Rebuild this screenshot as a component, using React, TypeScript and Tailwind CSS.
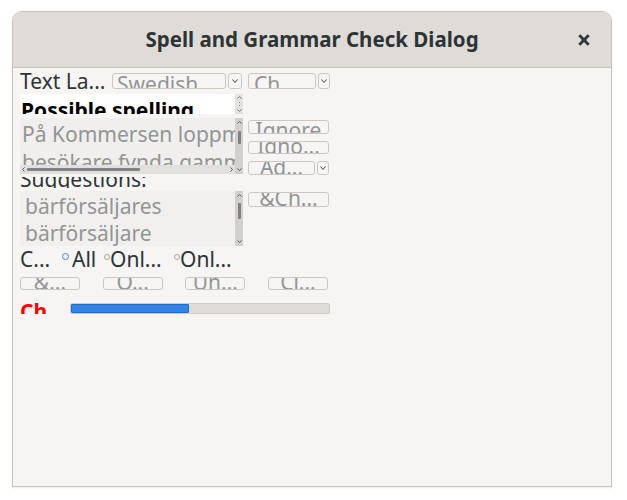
import React from "react";

function Chev({ dir, color = "#3d4244", w = 6, h = 4 }: { dir: "up" | "down" | "left" | "right"; color?: string; w?: number; h?: number }) {
  const pts =
    dir === "down"
      ? `0.5,0.5 ${w / 2},${h - 0.5} ${w - 0.5},0.5`
      : dir === "up"
      ? `0.5,${h - 0.5} ${w / 2},0.5 ${w - 0.5},${h - 0.5}`
      : dir === "left"
      ? `${w - 0.5},0.5 0.5,${h / 2} ${w - 0.5},${h - 0.5}`
      : `0.5,0.5 ${w - 0.5},${h / 2} 0.5,${h - 0.5}`;
  return (
    <svg width={w} height={h} viewBox={`0 0 ${w} ${h}`} className="block shrink-0">
      <polyline points={pts} fill="none" stroke={color} strokeWidth="1" />
    </svg>
  );
}

function ArrowBtn({ className = "" }: { className?: string }) {
  return (
    <div className={`h-full border border-[#cdc7c2] rounded-[3px] flex items-center justify-center shrink-0 ${className}`}>
      <Chev dir="down" w={6} h={4} />
    </div>
  );
}

function Btn({ children, className = "", inner = "" }: { children: React.ReactNode; className?: string; inner?: string }) {
  return (
    <div className={`border border-[#cdc7c2] rounded-[3px] overflow-hidden whitespace-nowrap text-center text-[#929595] shrink-0 ${className}`}>
      <div className={`leading-[14px] ${inner}`}>{children}</div>
    </div>
  );
}

function VScroll({ h, thumbTop, thumbH }: { h: string; thumbTop: string; thumbH: string }) {
  return (
    <div className={`w-[8px] ${h} bg-[#d2d0cd] flex flex-col items-center shrink-0`}>
      <div className="mt-[3px]">
        <Chev dir="up" w={5} h={3} color="#555a5c" />
      </div>
      <div className={`${thumbTop} ${thumbH} w-[3px] bg-[#7f8284] rounded-[1px]`} />
      <div className="flex-1" />
      <div className="mb-[3px]">
        <Chev dir="down" w={5} h={3} color="#555a5c" />
      </div>
    </div>
  );
}

export default function App() {
  return (
    <div className="w-[627px] h-[500px] bg-white pl-[12px] pt-[11px] font-['Noto_Sans',sans-serif]">
      <div className="w-[600px] h-[476px] rounded-t-[10px] border border-[#c6c2be] bg-[#f6f5f4] flex flex-col overflow-hidden shadow-[0_1px_2px_rgba(0,0,0,0.08)]">
        {/* Title bar */}
        <div className="h-[56px] shrink-0 bg-[#dfdcd8] border-b border-[#c5c1bc] grid grid-cols-[1fr_auto_1fr] items-center">
          <div />
          <div className="text-[20.5px] font-bold text-[#2e3436] leading-[21px] whitespace-nowrap">
            Spell and Grammar Check Dialog
          </div>
          <div className="flex justify-end pr-[21px]">
            <svg width="12" height="12" viewBox="0 0 12 12" className="block">
              <path d="M1.3 1.3 L10.7 10.7 M10.7 1.3 L1.3 10.7" stroke="#2e3436" strokeWidth="2.8" strokeLinecap="butt" />
            </svg>
          </div>
        </div>

        {/* Content */}
        <div className="pl-[7px] pt-[5px] flex flex-col text-[21px] text-[#2e3436]">
          {/* Row 1 */}
          <div className="flex h-[16px]">
            <div className="w-[92px] h-[16px] leading-[16px] overflow-hidden whitespace-nowrap shrink-0">Text La...</div>
            <div className="w-[114px] h-[16px] border border-[#cdc7c2] rounded-[3px] overflow-hidden pl-[4px] pt-[2px] text-[#929595] whitespace-nowrap shrink-0">
              <div className="leading-[16px]">Swedish</div>
            </div>
            <ArrowBtn className="ml-[2px] w-[14px]" />
            <div className="ml-[6px] w-[68px] h-[16px] border border-[#cdc7c2] rounded-[3px] overflow-hidden pl-[5px] pt-[2px] text-[#929595] whitespace-nowrap shrink-0">
              <div className="leading-[16px]">Ch...</div>
            </div>
            <ArrowBtn className="ml-[2px] w-[12px]" />
          </div>

          {/* Row 2 */}
          <div className="flex h-[20px] mt-[5px]">
            <div className="w-[215px] h-[20px] bg-white overflow-hidden pl-[1px] pt-[6px] font-bold text-black whitespace-nowrap">
              <div className="leading-[20px]">Possible spelling</div>
            </div>
            <div className="w-[8px] h-[20px] bg-[#e4e2df] flex flex-col items-center justify-between py-[2px]">
              <Chev dir="up" w={5} h={3} color="#6a6e70" />
              <div className="w-[1px] h-[4px] border-t border-b border-[#8a8d8f]" />
              <Chev dir="down" w={5} h={3} color="#6a6e70" />
            </div>
          </div>

          {/* Row 3 */}
          <div className="flex mt-[4px]">
            <div className="flex h-[56px]">
              <div className="w-[215px] h-[56px] flex flex-col bg-[#f0efed]">
                <div className="h-[47px] overflow-hidden pl-[2px] pt-[2px] text-[#929595] whitespace-nowrap">
                  <div className="leading-[28px]">På Kommersen loppmarknad</div>
                  <div className="leading-[28px]">besökare fynda gammalt</div>
                </div>
                <div className="h-[9px] bg-[#e2e0dd] flex items-center pl-[2px] pr-[2px]">
                  <Chev dir="left" w={3} h={5} color="#555a5c" />
                  <div className="ml-[2px] w-[113px] h-[3px] bg-[#7f8284] rounded-[1px]" />
                  <div className="flex-1" />
                  <Chev dir="right" w={3} h={5} color="#555a5c" />
                </div>
              </div>
              <VScroll h="h-[56px]" thumbTop="mt-[7px]" thumbH="h-[13px]" />
            </div>
            <div className="ml-[5px] w-[82px] flex flex-col">
              <Btn className="mt-[2px] h-[14px] w-[81px]" inner="pt-[2px]">Ignore</Btn>
              <Btn className="mt-[7px] h-[13px] w-[81px]" inner="-mt-[3px]">Igno...</Btn>
              <div className="mt-[7px] flex h-[14px]">
                <Btn className="h-[14px] w-[67px]" inner="-mt-[2px]">Ad...</Btn>
                <ArrowBtn className="ml-[2px] w-[12px]" />
              </div>
            </div>
          </div>

          {/* Suggestions label */}
          <div className="h-[11px] mt-[2px] overflow-hidden w-[215px] whitespace-nowrap">
            <div className="leading-[20px] -mt-[8px]">Suggestions:</div>
          </div>

          {/* Suggestions row */}
          <div className="flex mt-[3px]">
            <div className="flex h-[55px]">
              <div className="w-[215px] h-[55px] bg-[#f1f0ee] overflow-hidden pl-[5px] pt-[2px] text-[#929595] whitespace-nowrap">
                <div className="leading-[27px]">bärförsäljares</div>
                <div className="leading-[27px]">bärförsäljare</div>
              </div>
              <VScroll h="h-[55px]" thumbTop="mt-[6px]" thumbH="h-[16px]" />
            </div>
            <div className="ml-[5px] w-[82px] flex flex-col">
              <Btn className="mt-[1px] h-[15px] w-[81px]" inner="-mt-[2px]">&amp;Ch...</Btn>
            </div>
          </div>

          {/* Radio row */}
          <div className="flex h-[18px] mt-[3px] leading-[18px] items-start whitespace-nowrap">
            <div className="w-[42px] overflow-hidden shrink-0 pt-[1px]">C...</div>
            <div className="mt-[4px] w-[7px] h-[7px] rounded-full border-[1.5px] border-[#3584e4] bg-[#f6f5f4] shrink-0" />
            <div className="ml-[3px] w-[32px] overflow-hidden shrink-0 pt-[1px]">All</div>
            <div className="mt-[5px] w-[6px] h-[6px] rounded-full border border-[#a8a8a6] shrink-0" />
            <div className="w-[64px] overflow-hidden shrink-0 pt-[1px]">Onl...</div>
            <div className="mt-[5px] w-[6px] h-[6px] rounded-full border border-[#a8a8a6] shrink-0" />
            <div className="w-[62px] overflow-hidden shrink-0 pt-[1px]">Onl...</div>
          </div>

          {/* Buttons row */}
          <div className="w-[308px] flex justify-between mt-[10px] h-[13px]">
            <Btn className="h-[13px] w-[60px]" inner="-mt-[3px]">&amp;...</Btn>
            <Btn className="h-[13px] w-[60px]" inner="-mt-[3px]">O...</Btn>
            <Btn className="h-[13px] w-[60px]" inner="-mt-[3px]">Un...</Btn>
            <Btn className="h-[13px] w-[60px]" inner="-mt-[3px]">Cl...</Btn>
          </div>

          {/* Progress row */}
          <div className="flex h-[13px] mt-[11px]">
            <div className="w-[50px] h-[13px] overflow-hidden whitespace-nowrap font-bold text-[#ff0000] shrink-0">
              <div className="leading-[20px]">Ch...</div>
            </div>
            <div className="mt-[2px] w-[260px] h-[11px] bg-[#dfdcd8] border border-[#cfcbc6] rounded-[2px] overflow-hidden flex">
              <div className="w-[118px] h-full bg-[#3584e4] border border-[#1c6bd1] rounded-[1px]" />
            </div>
          </div>
        </div>
      </div>
    </div>
  );
}
